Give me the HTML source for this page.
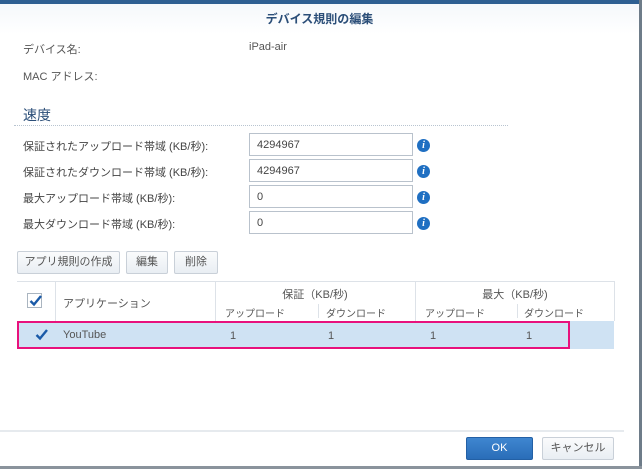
<!DOCTYPE html>
<html><head><meta charset="utf-8"><style>
*{box-sizing:border-box;margin:0;padding:0}
body{width:642px;height:469px;overflow:hidden;background:#fff;font-family:"Liberation Sans","Noto Sans CJK JP",sans-serif;font-size:11px;color:#444;position:relative}
.a{position:absolute;white-space:nowrap}
.inp{position:absolute;left:249px;width:164px;height:23px;border:1px solid #b9c2cc;background:#fff;padding:5px 7px 0;font-size:11px;color:#444}
.ic{position:absolute;left:417px;width:13px;height:13px;border-radius:50%;background:#1f6fc2;color:#fff;font:bold italic 10px "Liberation Serif",serif;text-align:center;line-height:13px}
.btn{position:absolute;top:251px;height:23px;border:1px solid #c9d0d8;border-radius:2px;background:linear-gradient(#fafbfc,#e9eef3);font-size:11px;color:#555;text-align:center;line-height:21px}
.vl{position:absolute;width:1px;background:#dde2e8}
.cb{position:absolute;width:15px;height:15px;border:1px solid #aab5c0;background:#fff}
.cb svg{position:absolute;left:1px;top:0}
.h{color:#555}
</style></head><body>
<div class="a" style="left:0;top:0;width:642px;height:4px;background:#2e5f92"></div>
<div class="a" style="left:639px;top:0;width:3px;height:469px;background:#6e7c89"></div>
<div class="a" style="left:0;top:466px;width:642px;height:3px;background:#8a939c"></div>
<div class="a" style="left:0;top:4px;width:639px;height:30px;background:linear-gradient(#f5f8fb,#fff)"></div>
<div class="a" style="left:0;top:10px;width:639px;text-align:center;font-size:12px;font-weight:bold;color:#2b4e78">デバイス規則の編集</div>
<div class="a h" style="left:23px;top:41px">デバイス名:</div>
<div class="a h" style="left:249px;top:41px">iPad-air</div>
<div class="a h" style="left:23px;top:68px">MAC アドレス:</div>
<div class="a" style="left:23px;top:105px;font-size:14px;color:#2b4e78">速度</div>
<div class="a" style="left:14px;top:125px;width:494px;border-top:1px dotted #b8c4d0"></div>
<div class="a" style="left:23px;top:138px">保証されたアップロード帯域 (KB/秒):</div>
<div class="a" style="left:23px;top:164px">保証されたダウンロード帯域 (KB/秒):</div>
<div class="a" style="left:23px;top:190px">最大アップロード帯域 (KB/秒):</div>
<div class="a" style="left:23px;top:216px">最大ダウンロード帯域 (KB/秒):</div>
<div class="inp" style="top:133px">4294967</div>
<div class="inp" style="top:159px">4294967</div>
<div class="inp" style="top:185px">0</div>
<div class="inp" style="top:211px">0</div>
<div class="ic" style="top:139px">i</div>
<div class="ic" style="top:165px">i</div>
<div class="ic" style="top:191px">i</div>
<div class="ic" style="top:217px">i</div>
<div class="btn" style="left:17px;width:103px">アプリ規則の作成</div>
<div class="btn" style="left:126px;width:42px">編集</div>
<div class="btn" style="left:174px;width:44px">削除</div>
<div class="a" style="left:17px;top:281px;width:597px;border-top:1px solid #dde2e8"></div>
<div class="vl" style="left:55px;top:281px;height:40px"></div>
<div class="vl" style="left:215px;top:281px;height:40px"></div>
<div class="vl" style="left:415px;top:281px;height:40px"></div>
<div class="vl" style="left:614px;top:281px;height:40px"></div>
<div class="vl" style="left:318px;top:304px;height:14px"></div>
<div class="vl" style="left:517px;top:304px;height:14px"></div>
<div class="cb" style="left:27px;top:293px"><svg width="13" height="13"><path d="M1.5 7 L5 10.5 L12 2" stroke="#1a5aa8" stroke-width="2.4" fill="none"/></svg></div>
<div class="a h" style="left:63px;top:295px">アプリケーション</div>
<div class="a h" style="left:215px;top:286px;width:200px;text-align:center">保証（KB/秒)</div>
<div class="a h" style="left:415px;top:286px;width:200px;text-align:center">最大（KB/秒)</div>
<div class="a h" style="left:225px;top:305px;font-size:10px">アップロード</div>
<div class="a h" style="left:326px;top:305px;font-size:10px">ダウンロード</div>
<div class="a h" style="left:425px;top:305px;font-size:10px">アップロード</div>
<div class="a h" style="left:524px;top:305px;font-size:10px">ダウンロード</div>
<div class="a" style="left:17px;top:321px;width:597px;height:28px;background:#cfe2f3"></div>
<div class="a" style="left:17px;top:321px;width:553px;height:28px;border:2px solid #e8127c"></div>
<div class="cb" style="left:33px;top:327px;border-color:#cfe2f3;background:transparent"><svg width="13" height="13"><path d="M1.5 7 L5 10.5 L12 2" stroke="#1a5aa8" stroke-width="2.4" fill="none"/></svg></div>
<div class="a h" style="left:63px;top:329px">YouTube</div>
<div class="a h" style="left:230px;top:330px">1</div>
<div class="a h" style="left:328px;top:330px">1</div>
<div class="a h" style="left:430px;top:330px">1</div>
<div class="a h" style="left:526px;top:330px">1</div>
<div class="a" style="left:0;top:430px;width:624px;border-top:2px solid #e6eaee"></div>
<div class="a" style="left:466px;top:437px;width:67px;height:23px;border-radius:2px;background:linear-gradient(#3f86d0,#2a6db8);border:1px solid #2360a5;color:#fff;text-align:center;line-height:21px">OK</div>
<div class="btn" style="left:542px;top:437px;width:72px;color:#555">キャンセル</div>
</body></html>
